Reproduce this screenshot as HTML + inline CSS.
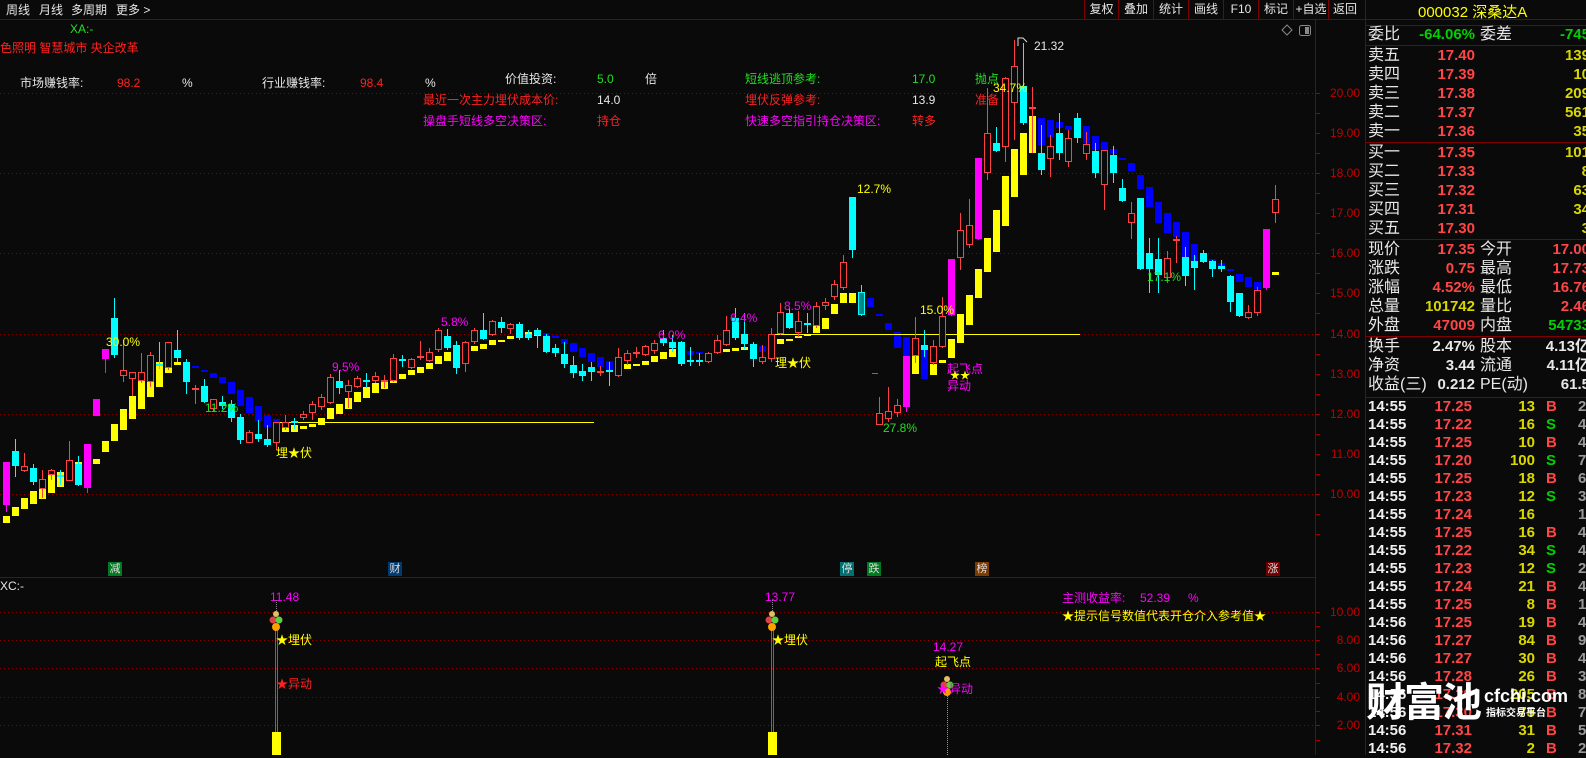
<!DOCTYPE html>
<html><head><meta charset="utf-8">
<style>
*{margin:0;padding:0;box-sizing:border-box}
body{width:1586px;height:755px;background:#0a0a0a;overflow:hidden;position:relative;font-family:"Liberation Sans","Noto Sans CJK SC",sans-serif;}
.t{position:absolute;white-space:nowrap;font-size:12px;line-height:14px;}
.w{color:#e6e6e6}.r{color:#ff2020}.g{color:#20e020}.m{color:#ff00ff}.y{color:#ffff00}
.p{position:absolute;white-space:nowrap;font-size:16px;line-height:19px;color:#e8e8e8}
.v{position:absolute;white-space:nowrap;font-size:15px;line-height:19px;font-weight:bold;text-align:right}
.ax{position:absolute;font-size:12px;color:#c00000;width:40px;text-align:right;left:1320px;line-height:14px}
.tb{position:absolute;top:0;height:19px;font-size:12px;line-height:19px;color:#e6e6e6;text-align:center;border-left:1px solid #800000}
.tag{position:absolute;top:562px;width:14px;height:14px;font-size:11px;line-height:14px;text-align:center;color:#ddd}
</style></head><body>
<svg id="sv" width="1586" height="755" style="position:absolute;left:0;top:0">
<g stroke="#800000" stroke-width="1">
<line x1="0" y1="19.5" x2="1586" y2="19.5"/>
<line x1="1315.5" y1="19" x2="1315.5" y2="755"/>
<line x1="1365.5" y1="0" x2="1365.5" y2="755"/>
<line x1="0" y1="577.5" x2="1315" y2="577.5"/>
<line x1="1366" y1="25.5" x2="1586" y2="25.5"/>
<line x1="1366" y1="45.5" x2="1586" y2="45.5"/>
<line x1="1366" y1="142.5" x2="1586" y2="142.5"/>
<line x1="1366" y1="239.5" x2="1586" y2="239.5"/>
<line x1="1366" y1="336.5" x2="1586" y2="336.5"/>
<line x1="1366" y1="397.5" x2="1586" y2="397.5"/>
</g>
<g stroke="#900000" stroke-width="1" stroke-dasharray="1,3">
<line x1="0" y1="93.5" x2="1315" y2="93.5"/><line x1="0" y1="173.5" x2="1315" y2="173.5"/>
<line x1="0" y1="253.5" x2="1315" y2="253.5"/><line x1="0" y1="334.5" x2="1315" y2="334.5"/>
<line x1="0" y1="414.5" x2="1315" y2="414.5"/><line x1="0" y1="494.5" x2="1315" y2="494.5"/>
<line x1="0" y1="612.5" x2="1315" y2="612.5"/><line x1="0" y1="640.5" x2="1315" y2="640.5"/>
<line x1="0" y1="668.5" x2="1315" y2="668.5"/><line x1="0" y1="697.5" x2="1315" y2="697.5"/>
<line x1="0" y1="725.5" x2="1315" y2="725.5"/>
</g>
<g id="ticks" stroke="#a00000"></g>
<g id="trend"></g>
<line x1="277" y1="422.5" x2="594" y2="422.5" stroke="#ffff00"/>
<line x1="774" y1="334.5" x2="1080" y2="334.5" stroke="#ffff00"/>
<g id="cand"></g>
<path d="M1018 46 L1018 38 L1023 38 L1027 42" stroke="#ddd" fill="none"/>
<line x1="872" y1="373.5" x2="878" y2="373.5" stroke="#00a0a0"/>
<path d="M1287 25 L1292 30 L1287 35 L1282 30 Z" stroke="#888" fill="none"/>
<rect x="1299.5" y="25.5" width="11" height="10" rx="2" stroke="#888" fill="none"/>
<rect x="1305" y="27" width="4" height="7" fill="#888"/>
<line x1="276.5" y1="600" x2="276.5" y2="616" stroke="#888" stroke-dasharray="1,1"/>
<line x1="275.5" y1="630" x2="275.5" y2="733" stroke="#ff00ff" stroke-width="1"/>
<line x1="277.5" y1="630" x2="277.5" y2="733" stroke="#ff00ff" stroke-width="1"/>
<rect x="272" y="732" width="9" height="23" fill="#ffff00"/>
<line x1="772.5" y1="600" x2="772.5" y2="616" stroke="#888" stroke-dasharray="1,1"/>
<line x1="771.5" y1="630" x2="771.5" y2="733" stroke="#ff00ff"/>
<line x1="773.5" y1="630" x2="773.5" y2="733" stroke="#ff00ff"/>
<rect x="768" y="732" width="9" height="23" fill="#ffff00"/>
<line x1="947.5" y1="690" x2="947.5" y2="755" stroke="#999" stroke-dasharray="1,1"/>
<g id="balls"></g>
</svg>

<div class="t w" style="left:6px;top:3px">周线</div>
<div class="t w" style="left:39px;top:3px">月线</div>
<div class="t w" style="left:71px;top:3px">多周期</div>
<div class="t w" style="left:116px;top:3px">更多 &gt;</div>
<div class="tb" style="left:1084px;width:34px">复权</div>
<div class="tb" style="left:1118px;width:35px">叠加</div>
<div class="tb" style="left:1153px;width:35px">统计</div>
<div class="tb" style="left:1188px;width:35px">画线</div>
<div class="tb" style="left:1223px;width:35px">F10</div>
<div class="tb" style="left:1258px;width:35px">标记</div>
<div class="tb" style="left:1293px;width:35px">+自选</div>
<div class="tb" style="left:1328px;width:38px;text-align:left;padding-left:4px">返回</div>

<div class="t g" style="left:70px;top:22px">XA:-</div>
<div class="t r" style="left:0;top:41px">色照明 智慧城市 央企改革</div>
<div class="t w" style="left:20px;top:76px">市场赚钱率:</div>
<div class="t r" style="left:117px;top:76px">98.2</div>
<div class="t w" style="left:182px;top:76px">%</div>
<div class="t w" style="left:262px;top:76px">行业赚钱率:</div>
<div class="t r" style="left:360px;top:76px">98.4</div>
<div class="t w" style="left:425px;top:76px">%</div>
<div class="t w" style="left:505px;top:72px">价值投资:</div>
<div class="t g" style="left:597px;top:72px">5.0</div>
<div class="t w" style="left:645px;top:72px">倍</div>
<div class="t r" style="left:423px;top:93px">最近一次主力埋伏成本价:</div>
<div class="t w" style="left:597px;top:93px">14.0</div>
<div class="t m" style="left:423px;top:114px">操盘手短线多空决策区:</div>
<div class="t r" style="left:597px;top:114px">持仓</div>
<div class="t g" style="left:745px;top:72px">短线逃顶参考:</div>
<div class="t g" style="left:912px;top:72px">17.0</div>
<div class="t g" style="left:975px;top:72px">抛点</div>
<div class="t r" style="left:745px;top:93px">埋伏反弹参考:</div>
<div class="t w" style="left:912px;top:93px">13.9</div>
<div class="t r" style="left:975px;top:93px">准备</div>
<div class="t m" style="left:745px;top:114px">快速多空指引持仓决策区:</div>
<div class="t r" style="left:912px;top:114px">转多</div>

<div class="t w" style="left:1034px;top:39px">21.32</div>
<div class="t y" style="left:993px;top:81px">34.7%</div>
<div class="t y" style="left:106px;top:335px">30.0%</div>
<div class="t g" style="left:205px;top:401px">11.2%</div>
<div class="t y" style="left:276px;top:446px">埋★伏</div>
<div class="t m" style="left:332px;top:360px">9.5%</div>
<div class="t m" style="left:441px;top:315px">5.8%</div>
<div class="t m" style="left:658px;top:328px">6.0%</div>
<div class="t m" style="left:730px;top:311px">6.4%</div>
<div class="t m" style="left:784px;top:299px">8.5%</div>
<div class="t y" style="left:775px;top:356px">理★伏</div>
<div class="t y" style="left:857px;top:182px">12.7%</div>
<div class="t y" style="left:920px;top:303px">15.0%</div>
<div class="t g" style="left:883px;top:421px">27.8%</div>
<div class="t m" style="left:947px;top:362px">起飞点</div>
<div class="t y" style="left:950px;top:370px;font-size:10px">★★</div>
<div class="t m" style="left:947px;top:379px">异动</div>
<div class="t g" style="left:1147px;top:270px">17.1%</div>

<div class="ax" style="top:86px">20.00</div><div class="ax" style="top:126px">19.00</div>
<div class="ax" style="top:166px">18.00</div><div class="ax" style="top:206px">17.00</div>
<div class="ax" style="top:246px">16.00</div><div class="ax" style="top:286px">15.00</div>
<div class="ax" style="top:327px">14.00</div><div class="ax" style="top:367px">13.00</div>
<div class="ax" style="top:407px">12.00</div><div class="ax" style="top:447px">11.00</div>
<div class="ax" style="top:487px">10.00</div>
<div class="ax" style="top:605px">10.00</div><div class="ax" style="top:633px">8.00</div>
<div class="ax" style="top:661px">6.00</div><div class="ax" style="top:690px">4.00</div>
<div class="ax" style="top:718px">2.00</div>

<div class="tag" style="left:108px;background:#007a20">减</div>
<div class="tag" style="left:388px;background:#003a70">财</div>
<div class="tag" style="left:840px;background:#007070">停</div>
<div class="tag" style="left:867px;background:#007a20">跌</div>
<div class="tag" style="left:975px;background:#7a3a00">榜</div>
<div class="tag" style="left:1266px;background:#700000">涨</div>

<div class="t w" style="left:0;top:579px">XC:-</div>
<div class="t m" style="left:270px;top:590px">11.48</div>
<div class="t y" style="left:276px;top:633px">★埋伏</div>
<div class="t r" style="left:276px;top:677px">★异动</div>
<div class="t m" style="left:765px;top:590px">13.77</div>
<div class="t y" style="left:772px;top:633px">★埋伏</div>
<div class="t m" style="left:933px;top:640px">14.27</div>
<div class="t y" style="left:935px;top:655px">起飞点</div>
<div class="t m" style="left:937px;top:682px">★异动</div>
<div class="t m" style="left:1062px;top:591px">主测收益率:</div>
<div class="t m" style="left:1140px;top:591px">52.39</div>
<div class="t m" style="left:1188px;top:591px">%</div>
<div class="t y" style="left:1062px;top:609px">★提示信号数值代表开仓介入参考值★</div>

<div class="p" style="left:1418px;top:3px;color:#ffff00;font-size:15px">000032 深桑达A</div>
<div id="panel"></div>

<div style="position:absolute;left:1366px;top:674px;font-size:40px;line-height:50px;font-weight:bold;color:#fff;font-family:'Noto Sans CJK SC',sans-serif;letter-spacing:-2px">财富池</div>
<div style="position:absolute;left:1484px;top:686px;font-size:18px;line-height:20px;font-weight:bold;color:#fff">cfchi.com</div>
<div style="position:absolute;left:1486px;top:708px;font-size:10px;line-height:12px;font-weight:bold;color:#fff">指标交易平台</div>

<script>
var NS="http://www.w3.org/2000/svg";
function el(p,t,a){var e=document.createElementNS(NS,t);for(var k in a)e.setAttribute(k,a[k]);p.appendChild(e);return e;}
var C=[[0,'m',462,505,462,512],[1,'c',451,466,439,477],[2,'r',466,471,453,472],[3,'c',468,482,464,485],[4,'r',479,489,470,498],[5,'r',470,475,469,480],[6,'y',475,476,470,485],[7,'r',460,481,441,481],[8,'c',464,485,456,486],[9,'m',444,488,444,493],[10,'m',399,416,399,416],[11,'m',349,359,349,373],[12,'c',318,355,298,358],[13,'r',370,376,340,382],[14,'r',372,379,372,396],[15,'r',372,381,353,383],[16,'r',355,382,352,387],[17,'y',364,365,342,369],[18,'r',342,368,342,370],[19,'c',350,358,330,362],[20,'c',362,382,359,394],[21,'r',388,390,385,404],[22,'c',386,402,379,403],[23,'r',399,409,399,412],[24,'c',402,406,396,409],[25,'c',404,418,400,422],[26,'c',417,440,414,444],[27,'r',432,443,430,443],[28,'c',434,439,420,442],[29,'c',439,445,425,447],[30,'r',422,443,422,450],[31,'r',422,428,415,430],[32,'y',421,422,418,429],[33,'r',414,418,411,420],[34,'r',404,413,401,420],[35,'r',397,407,394,410],[36,'r',377,403,374,404],[37,'c',381,388,370,394],[38,'r',385,392,380,408],[39,'r',378,387,376,388],[40,'y',380,381,373,388],[41,'r',376,381,372,383],[42,'x',380,381,375,388],[43,'r',358,381,354,382],[44,'y',359,360,355,367],[45,'r',359,368,358,369],[46,'x',356,357,341,360],[47,'r',352,361,348,362],[48,'r',330,350,328,352],[49,'c',336,348,329,350],[50,'c',345,368,341,374],[51,'r',342,364,341,372],[52,'r',330,342,328,344],[53,'c',330,339,313,340],[54,'r',321,335,320,336],[55,'c',322,328,317,333],[56,'r',324,329,323,334],[57,'c',324,338,322,340],[58,'c',334,338,330,340],[59,'c',330,335,328,348],[60,'c',336,352,334,353],[61,'c',348,353,344,357],[62,'c',354,364,342,368],[63,'c',365,373,356,378],[64,'c',371,376,364,381],[65,'c',367,372,362,381],[66,'x',371,372,366,376],[67,'c',370,372,362,386],[68,'r',357,376,348,377],[69,'r',353,361,350,365],[70,'x',352,353,347,358],[71,'r',346,355,345,356],[72,'r',343,351,340,354],[73,'c',338,343,330,346],[74,'c',342,348,335,352],[75,'c',342,364,341,366],[76,'y',360,361,347,366],[77,'y',360,361,353,366],[78,'r',353,362,352,363],[79,'r',340,353,335,354],[80,'r',330,345,316,346],[81,'c',318,338,308,340],[82,'c',334,344,313,349],[83,'c',344,359,342,367],[84,'r',357,362,345,364],[85,'r',334,359,328,362],[86,'r',312,334,303,335],[87,'c',313,328,307,329],[88,'r',321,333,311,337],[89,'y',323,324,313,333],[90,'r',306,326,302,328],[91,'r',302,306,298,310],[92,'r',284,297,280,300],[93,'r',262,288,255,290],[94,'c',197,250,197,258],[95,'t',292,315,285,316],[97,'r',413,425,397,425],[98,'r',411,419,387,422],[99,'r',405,413,399,417],[100,'m',356,407,356,412],[101,'r',338,356,317,363],[102,'c',345,350,330,357],[103,'r',346,363,340,365],[104,'r',316,347,297,348],[105,'m',259,315,259,316],[106,'r',230,258,213,270],[107,'r',225,245,199,248],[108,'m',158,239,158,240],[109,'r',133,173,88,180],[110,'c',143,151,127,152],[111,'r',78,147,77,162],[112,'r',66,103,40,140],[113,'c',86,123,43,125],[114,'x',107,108,87,153],[115,'c',153,170,125,175],[116,'r',146,159,135,177],[117,'c',133,153,113,160],[118,'r',138,162,130,167],[119,'c',118,138,113,143],[120,'r',144,154,132,160],[121,'c',151,173,143,178],[122,'r',150,185,150,210],[123,'c',155,173,146,183],[124,'c',188,201,179,202],[125,'r',213,223,202,239],[126,'c',198,269,198,270],[127,'c',253,269,238,293],[128,'c',259,275,238,293],[129,'r',258,278,251,283],[130,'x',239,240,236,263],[131,'c',257,276,247,286],[132,'c',261,268,255,290],[133,'c',253,262,250,263],[134,'c',261,269,260,277],[135,'c',266,269,260,272],[136,'c',276,302,275,312],[137,'c',293,316,293,317],[138,'r',312,318,305,319],[139,'r',290,313,287,316],[140,'m',229,288,229,290],[141,'r',199,213,185,223]];
var Y=[[0,516,523],[1,507,516],[2,498,509],[3,491,504],[4,488,499],[5,475,493],[6,472,487],[7,466,478],[8,462,470],[10,459,464],[11,441,452],[12,424,441],[13,409,430],[14,396,419],[15,380,409],[16,382,397],[17,362,387],[18,368,373],[19,362,365],[31,428,432],[32,425,432],[33,426,429],[34,424,427],[35,418,425],[36,408,419],[37,404,414],[38,398,409],[39,392,402],[40,387,398],[41,383,393],[42,381,389],[43,380,383],[44,374,379],[45,370,375],[46,367,373],[47,363,369],[48,356,364],[49,352,361],[52,346,351],[53,344,349],[54,340,345],[55,340,342],[56,336,339],[58,332,338],[59,334,336],[69,364,369],[70,364,366],[71,361,365],[72,356,362],[73,352,359],[74,349,357],[80,349,352],[81,348,351],[82,347,350],[86,339,344],[87,339,341],[88,336,338],[89,334,336],[90,326,333],[91,318,329],[92,304,314],[93,293,303],[94,293,303],[101,356,374],[103,364,375],[104,360,363],[105,339,358],[106,314,343],[107,295,325],[108,269,298],[109,238,272],[110,210,252],[111,176,226],[112,149,197],[113,133,175],[114,116,153],[141,272,275]];
var B=[[21,366,368],[22,370,372],[23,373,378],[24,377,383],[25,382,394],[26,390,406],[27,397,413],[28,406,421],[29,415,427],[30,419,422],[60,333,336],[61,336,338],[62,339,344],[63,343,352],[64,348,357],[65,353,362],[66,357,367],[67,361,370],[76,351,355],[77,352,354],[84,346,352],[96,298,307],[97,314,316],[98,323,330],[99,332,348],[100,337,356],[102,350,379],[115,118,145],[116,120,137],[117,122,128],[118,126,130],[120,126,143],[121,136,150],[122,142,150],[123,149,154],[124,158,160],[125,163,171],[126,175,189],[127,187,207],[128,202,223],[129,213,233],[130,222,237],[131,232,257],[132,244,261],[134,259,262],[135,263,266],[136,269,271],[137,274,282],[138,277,287],[139,282,289]];
var tg=document.getElementById('trend'),cg=document.getElementById('cand');
function X(i){return 3+9*i;}
Y.forEach(function(d){el(tg,'rect',{x:X(d[0]),y:d[1],width:7,height:Math.max(2,d[2]-d[1]),fill:'#ffff00'});});
B.forEach(function(d){el(tg,'rect',{x:X(d[0]),y:d[1],width:7,height:Math.max(2,d[2]-d[1]),fill:'#0000ff'});});
C.forEach(function(d){var x=X(d[0]),t=d[1],a=d[2],b=d[3],wt=d[4],wb=d[5],cx=x+3.5;
 var col={r:'#ff4040',c:'#00ffff',m:'#ff00ff',t:'#00ffff',x:'#ff4040',y:'#00ffff'}[t];
 el(cg,'line',{x1:cx,y1:wt,x2:cx,y2:wb,stroke:col,'stroke-width':1});
 if(t=='r'){el(cg,'rect',{x:x+0.5,y:a+0.5,width:6,height:Math.max(1,b-a-1),fill:'#0a0a0a',stroke:col,'stroke-width':1});}
 else if(t=='x'||t=='y'){el(cg,'rect',{x:x,y:a,width:7,height:2,fill:col});}
 else if(t=='t'){el(cg,'rect',{x:x+0.5,y:a+0.5,width:6,height:b-a-1,fill:'#008888',stroke:col});}
 else{el(cg,'rect',{x:x,y:a,width:7,height:b-a,fill:col});}
});
var tk=document.getElementById('ticks');
[93,113,133,153,173,193,213,233,253,273,293,313,334,354,374,394,414,434,454,474,494,514,534,612,626,640,654,668,683,697,711,725,740].forEach(function(y){el(tk,'line',{x1:1316,y1:y+0.5,x2:1320,y2:y+0.5});});
var bg=document.getElementById('balls');
[[276,620],[772,620],[947,685]].forEach(function(p){var x=p[0],y=p[1];
 el(bg,'circle',{cx:x,cy:y-6,r:3,fill:'#e0c060'});el(bg,'circle',{cx:x-3,cy:y,r:3.5,fill:'#e04040'});
 el(bg,'circle',{cx:x+3,cy:y,r:3.5,fill:'#60d040'});el(bg,'circle',{cx:x,cy:y+7,r:4,fill:'#ffa000'});});
var P=document.getElementById('panel'),h='';
function lab(x,y,s){h+='<div class="p" style="left:'+x+'px;top:'+(y-10)+'px">'+s+'</div>';}
function val(r,y,s,c,w){h+='<div class="v" style="left:'+(r-(w||90))+'px;width:'+(w||90)+'px;top:'+(y-10)+'px;color:'+c+'">'+s+'</div>';}
var RED='#ff4545',YEL='#d8d800',GRN='#00d000',WH='#e8e8e8';
lab(1368,35,'委比');val(1475,35,'-64.06%',GRN);lab(1480,35,'委差');val(1590,35,'-745',GRN);
var s=[['卖五','17.40','139'],['卖四','17.39','10'],['卖三','17.38','209'],['卖二','17.37','561'],['卖一','17.36','35'],['买一','17.35','101'],['买二','17.33','8'],['买三','17.32','63'],['买四','17.31','34'],['买五','17.30','3']];
var ys=[56,75,94,113,132,153,172,191,210,229];
s.forEach(function(r,k){lab(1368,ys[k],r[0]);val(1475,ys[k],r[1],RED);val(1590,ys[k],r[2],YEL);});
var q=[['现价','17.35',RED,'今开','17.00',RED],['涨跌','0.75',RED,'最高','17.73',RED],['涨幅','4.52%',RED,'最低','16.76',RED],['总量','101742',YEL,'量比','2.46',RED],['外盘','47009',RED,'内盘','54733',GRN]];
[250,269,288,307,326].forEach(function(y,k){var r=q[k];lab(1368,y,r[0]);val(1475,y,r[1],r[2]);lab(1480,y,r[3]);val(1590,y,r[4],r[5]);});
var q2=[['换手','2.47%','股本','4.13亿'],['净资','3.44','流通','4.11亿'],['收益(三)','0.212','PE(动)','61.5']];
[347,366,385].forEach(function(y,k){var r=q2[k];lab(1368,y,r[0]);val(1475,y,r[1],WH);lab(1480,y,r[2]);val(1590,y,r[3],WH);});
var tr=[['14:55','17.25','13','B','2'],['14:55','17.22','16','S','4'],['14:55','17.25','10','B','4'],['14:55','17.20','100','S','7'],['14:55','17.25','18','B','6'],['14:55','17.23','12','S','3'],['14:55','17.24','16','','1'],['14:55','17.25','16','B','4'],['14:55','17.22','34','S','4'],['14:55','17.23','12','S','2'],['14:55','17.24','21','B','4'],['14:55','17.25','8','B','1'],['14:56','17.25','19','B','4'],['14:56','17.27','84','B','9'],['14:56','17.27','30','B','4'],['14:56','17.28','26','B','3'],['14:56','17.29','205','B','8'],['14:56','17.30','75','B','7'],['14:56','17.31','31','B','5'],['14:56','17.32','2','B','2']];
tr.forEach(function(r,k){var y=407+18*k;
 h+='<div class="v" style="left:1368px;top:'+(y-10)+'px;color:#f0f0f0;text-align:left">'+r[0]+'</div>';
 val(1472,y,r[1],RED);val(1535,y,r[2],YEL,50);
 h+='<div class="v" style="left:1546px;top:'+(y-10)+'px;color:'+(r[3]=='B'?RED:GRN)+';text-align:left">'+r[3]+'</div>';
 h+='<div class="v" style="left:1578px;top:'+(y-10)+'px;color:#999;text-align:left">'+r[4]+'</div>';});
P.innerHTML=h;
</script>
</body></html>
